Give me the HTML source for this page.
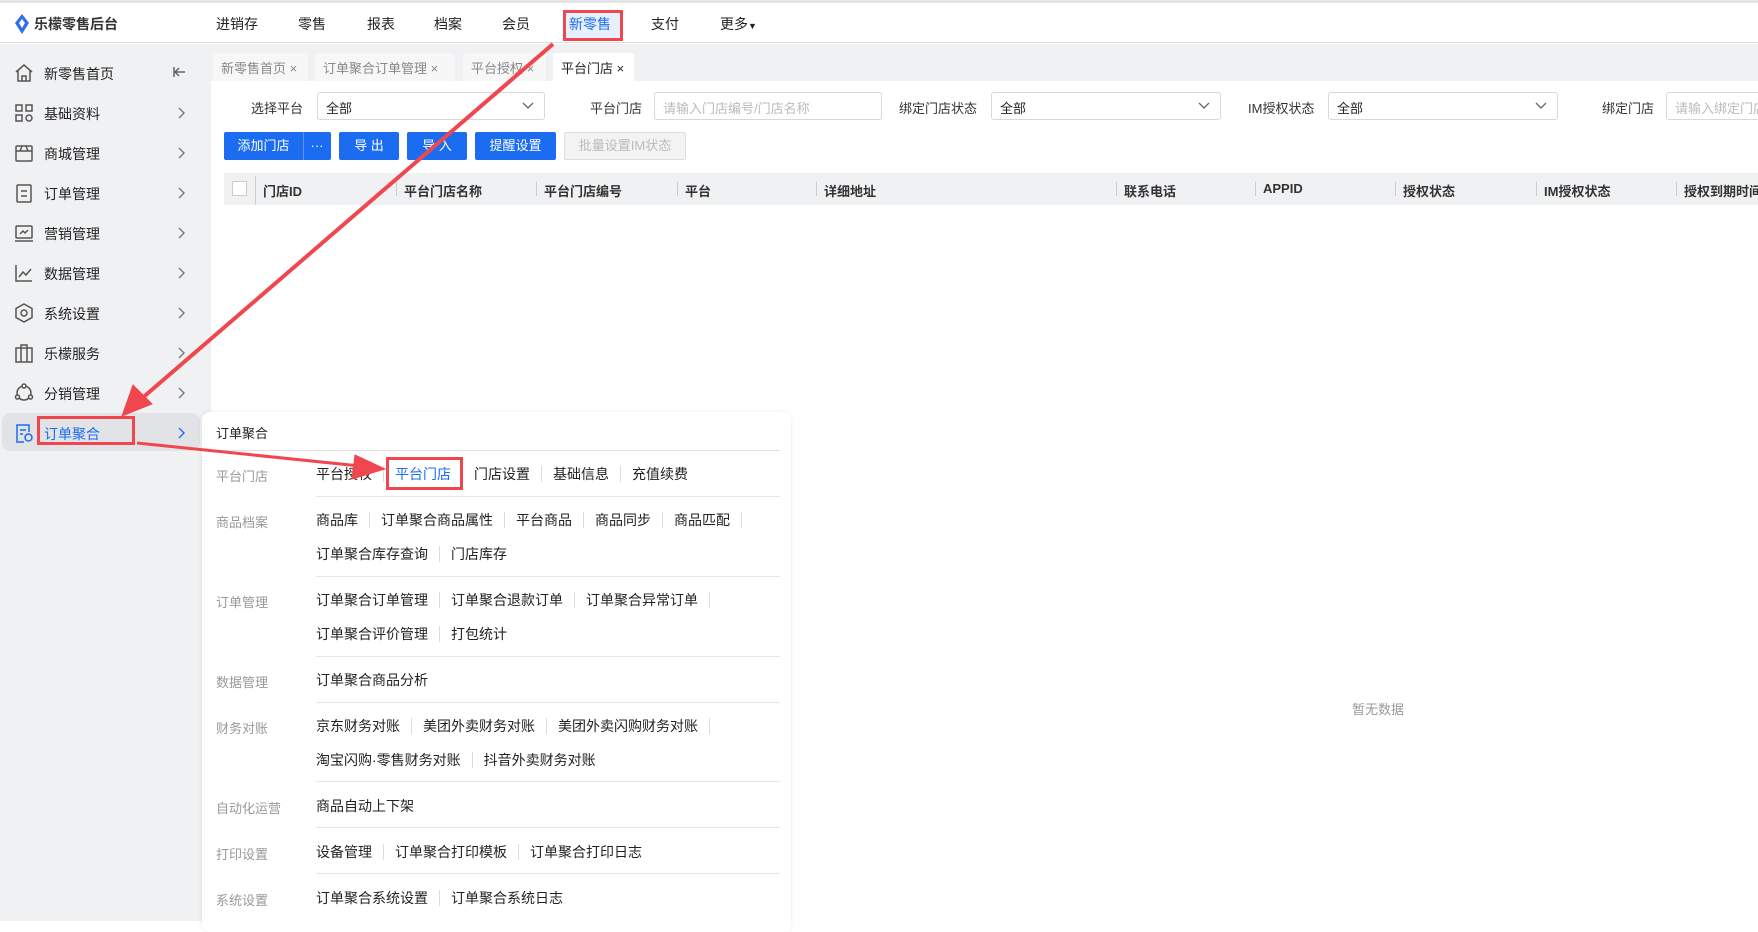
<!DOCTYPE html>
<html><head><meta charset="utf-8"><style>
*{box-sizing:border-box;margin:0;padding:0}
body{width:1758px;height:921px;overflow:hidden;background:#fff;font-family:"Liberation Sans","Noto Sans CJK SC",sans-serif;font-size:14px;color:#222;position:relative}
.a{position:absolute;white-space:nowrap}
.hdr{left:0;top:0;width:1758px;height:43px;border-top:3px solid #e4e5e7;border-bottom:1px solid #dcdde0;background:#fff}
.nav{top:14px;font-size:14px;color:#222}
.side{left:0;top:44px;width:211px;height:877px;background:#f0f1f3}
.si{left:44px;font-size:14px;color:#222}
.chev{left:176px}
.ico{left:14px}
.tabbar{left:211px;top:44px;width:1547px;height:37px;background:#f0f1f3}
.tab{top:53px;height:28px;background:#f7f7f8;color:#888;font-size:13px;padding:5px 8px;border-radius:3px 3px 0 0}
.lbl{font-size:13px;color:#333;top:98px}
.sel{top:92px;height:28px;border:1px solid #d8d8d8;border-radius:3px;font-size:13px;padding:5px 8px;color:#222}
.sel svg{position:absolute;right:10px;top:9px}
.ph{color:#bbb}
.btn{top:132px;height:28px;background:#1b6cf0;color:#fff;font-size:13px;border-radius:2px;text-align:center;line-height:28px}
.th{top:173px;left:224px;width:1534px;height:32px;background:#f0f1f3}
.tc{top:181px;font-size:13px;font-weight:bold;color:#333}
.tsep{top:182px;width:1px;height:14px;background:#ccc}
.pop{left:202px;top:412px;width:589px;height:520px;background:#fff;border-radius:8px;box-shadow:0 0 6px rgba(0,0,0,.08)}
.pl{left:216px;color:#999;font-size:13px}
.row{left:316px;font-size:14px;color:#222;display:flex}
.row span{padding-right:11px;margin-right:11px;border-right:1px solid #ddd;line-height:16px}
.hl{left:316px;width:464px;height:1px;background:#e6e6e6}
.red{border:3px solid #f0474f}
</style></head><body>
<div class="a hdr"></div>
<svg class="a" style="left:14px;top:14px" width="16" height="20" viewBox="0 0 16 20"><path d="M8 0 L15 9 L8 20 L1 9 Z" fill="#2f6fe8"/><path d="M8 5 L11 9 L8 14 L5 9Z" fill="#fff"/></svg>
<div class="a" style="left:34px;top:14px;font-size:14px;font-weight:bold;color:#333">乐檬零售后台</div>
<div class="a nav" style="left:216px">进销存</div>
<div class="a nav" style="left:298px">零售</div>
<div class="a nav" style="left:367px">报表</div>
<div class="a nav" style="left:434px">档案</div>
<div class="a nav" style="left:502px">会员</div>
<div class="a" style="left:563px;top:10px;width:60px;height:31px;background:#e8effd;border:3px solid #f0474f"></div>
<div class="a nav" style="left:569px;color:#1b6cf0">新零售</div>
<div class="a nav" style="left:651px">支付</div>
<div class="a nav" style="left:720px">更多<span style="font-size:9px">▼</span></div>

<div class="a side"></div>
<div class="a" style="left:2px;top:413px;width:198px;height:38px;background:#e2e3e6;border-radius:8px"></div>
<svg class="a ico" style="top:63px" width="20" height="20" fill="none" stroke="#555" stroke-width="1.5"><path d="M2 9 L10 2 L18 9 M4 7 V18 H16 V7 M8 18 V13 H12 V18"/></svg>
<div class="a si" style="top:64px">新零售首页</div>
<svg class="a" style="left:172px;top:65px" width="14" height="14" fill="none" stroke="#666" stroke-width="1.5"><path d="M2 2 V12 M13 7 H3 M7 3 L3 7 L7 11"/></svg>
<svg class="a ico" style="top:103px" width="20" height="20" fill="none" stroke="#555" stroke-width="1.5"><rect x="2" y="2" width="6" height="6"/><rect x="12" y="2" width="6" height="6"/><rect x="2" y="12" width="6" height="6"/><circle cx="15" cy="15" r="3"/></svg>
<div class="a si" style="top:104px">基础资料</div>
<svg class="a ico" style="top:143px" width="20" height="20" fill="none" stroke="#555" stroke-width="1.5"><rect x="2" y="3" width="16" height="15" rx="1"/><path d="M2 8 H18 M6 8 L8 3 M14 8 L12 3"/></svg>
<div class="a si" style="top:144px">商城管理</div>
<svg class="a ico" style="top:183px" width="20" height="20" fill="none" stroke="#555" stroke-width="1.5"><rect x="3" y="2" width="14" height="17" rx="1"/><path d="M7 8 H13 M7 13 H13"/></svg>
<div class="a si" style="top:184px">订单管理</div>
<svg class="a ico" style="top:223px" width="20" height="20" fill="none" stroke="#555" stroke-width="1.5"><rect x="2" y="3" width="16" height="12" rx="1"/><path d="M1 18 H19 M6 11 L9 8 L11 10 L14 7"/></svg>
<div class="a si" style="top:224px">营销管理</div>
<svg class="a ico" style="top:263px" width="20" height="20" fill="none" stroke="#555" stroke-width="1.5"><path d="M2 2 V18 H18 M5 14 L9 9 L12 12 L17 6"/></svg>
<div class="a si" style="top:264px">数据管理</div>
<svg class="a ico" style="top:303px" width="20" height="20" fill="none" stroke="#555" stroke-width="1.5"><path d="M10 1 L18 5.5 V14.5 L10 19 L2 14.5 V5.5Z"/><circle cx="10" cy="10" r="3"/></svg>
<div class="a si" style="top:304px">系统设置</div>
<svg class="a ico" style="top:343px" width="20" height="20" fill="none" stroke="#555" stroke-width="1.5"><rect x="2" y="5" width="16" height="14"/><path d="M7 5 V2 H13 V5 M7 5 V19 M13 5 V19"/></svg>
<div class="a si" style="top:344px">乐檬服务</div>
<svg class="a ico" style="top:383px" width="20" height="20" fill="none" stroke="#555" stroke-width="1.5"><circle cx="10" cy="10" r="7"/><circle cx="10" cy="3" r="2" fill="#f0f1f3"/><circle cx="3.5" cy="14" r="2" fill="#f0f1f3"/><circle cx="16.5" cy="14" r="2" fill="#f0f1f3"/></svg>
<div class="a si" style="top:384px">分销管理</div>
<svg class="a ico" style="top:423px" width="20" height="20" fill="none" stroke="#1b6cf0" stroke-width="1.5"><path d="M15 9 V2 H3 V19 H10"/><path d="M6 7 H12 M6 11 H9"/><circle cx="14.5" cy="14.5" r="3.5"/></svg>
<div class="a red" style="left:37px;top:416px;width:98px;height:29px"></div>
<div class="a si" style="top:424px;color:#1b6cf0">订单聚合</div>
<svg class="a chev" style="top:106px" width="10" height="14" fill="none" stroke="#777" stroke-width="1.4"><path d="M3 2 L8 7 L3 12"/></svg>
<svg class="a chev" style="top:146px" width="10" height="14" fill="none" stroke="#777" stroke-width="1.4"><path d="M3 2 L8 7 L3 12"/></svg>
<svg class="a chev" style="top:186px" width="10" height="14" fill="none" stroke="#777" stroke-width="1.4"><path d="M3 2 L8 7 L3 12"/></svg>
<svg class="a chev" style="top:226px" width="10" height="14" fill="none" stroke="#777" stroke-width="1.4"><path d="M3 2 L8 7 L3 12"/></svg>
<svg class="a chev" style="top:266px" width="10" height="14" fill="none" stroke="#777" stroke-width="1.4"><path d="M3 2 L8 7 L3 12"/></svg>
<svg class="a chev" style="top:306px" width="10" height="14" fill="none" stroke="#777" stroke-width="1.4"><path d="M3 2 L8 7 L3 12"/></svg>
<svg class="a chev" style="top:346px" width="10" height="14" fill="none" stroke="#777" stroke-width="1.4"><path d="M3 2 L8 7 L3 12"/></svg>
<svg class="a chev" style="top:386px" width="10" height="14" fill="none" stroke="#777" stroke-width="1.4"><path d="M3 2 L8 7 L3 12"/></svg>
<svg class="a chev" style="top:426px" width="10" height="14" fill="none" stroke="#1b6cf0" stroke-width="1.4"><path d="M3 2 L8 7 L3 12"/></svg>

<div class="a tabbar"></div>
<div class="a tab" style="left:213px;width:95px">新零售首页 ×</div>
<div class="a tab" style="left:315px;width:140px">订单聚合订单管理 ×</div>
<div class="a tab" style="left:463px;width:83px">平台授权 ×</div>
<div class="a tab" style="left:553px;width:81px;background:#fff;color:#222">平台门店 ×</div>

<div class="a lbl" style="left:251px">选择平台</div>
<div class="a sel" style="left:317px;width:228px">全部<svg width="12" height="8" fill="none" stroke="#666" stroke-width="1.3"><path d="M1 1 L6 6 L11 1"/></svg></div>
<div class="a lbl" style="left:590px">平台门店</div>
<div class="a sel ph" style="left:654px;width:228px">请输入门店编号/门店名称</div>
<div class="a lbl" style="left:899px">绑定门店状态</div>
<div class="a sel" style="left:991px;width:230px">全部<svg width="12" height="8" fill="none" stroke="#666" stroke-width="1.3"><path d="M1 1 L6 6 L11 1"/></svg></div>
<div class="a lbl" style="left:1248px">IM授权状态</div>
<div class="a sel" style="left:1328px;width:230px">全部<svg width="12" height="8" fill="none" stroke="#666" stroke-width="1.3"><path d="M1 1 L6 6 L11 1"/></svg></div>
<div class="a lbl" style="left:1602px">绑定门店</div>
<div class="a sel ph" style="left:1666px;width:100px">请输入绑定门店</div>

<div class="a btn" style="left:224px;width:107px"><span style="display:inline-block;width:79px;border-right:1px solid #5b93f3">添加门店</span><span style="display:inline-block;width:27px">···</span></div>
<div class="a btn" style="left:339px;width:60px">导 出</div>
<div class="a btn" style="left:407px;width:60px">导 入</div>
<div class="a btn" style="left:475px;width:81px">提醒设置</div>
<div class="a btn" style="left:564px;width:122px;background:#f3f3f4;color:#bbb;border:1px solid #ddd;line-height:26px">批量设置IM状态</div>

<div class="a th"></div>
<div class="a" style="left:232px;top:181px;width:15px;height:15px;border:1px solid #ccc;background:#fff"></div>
<div class="a tsep" style="left:255px;top:176px;height:29px"></div>
<div class="a tc" style="left:263px">门店ID</div>
<div class="a tsep" style="left:396px"></div><div class="a tc" style="left:404px">平台门店名称</div>
<div class="a tsep" style="left:536px"></div><div class="a tc" style="left:544px">平台门店编号</div>
<div class="a tsep" style="left:677px"></div><div class="a tc" style="left:685px">平台</div>
<div class="a tsep" style="left:816px"></div><div class="a tc" style="left:824px">详细地址</div>
<div class="a tsep" style="left:1116px"></div><div class="a tc" style="left:1124px">联系电话</div>
<div class="a tsep" style="left:1255px"></div><div class="a tc" style="left:1263px">APPID</div>
<div class="a tsep" style="left:1395px"></div><div class="a tc" style="left:1403px">授权状态</div>
<div class="a tsep" style="left:1536px"></div><div class="a tc" style="left:1544px">IM授权状态</div>
<div class="a tsep" style="left:1676px"></div><div class="a tc" style="left:1684px">授权到期时间</div>
<div class="a" style="left:1352px;top:699px;font-size:13px;color:#999">暂无数据</div>

<div class="a pop"></div>
<div class="a" style="left:216px;top:423px;font-size:13px">订单聚合</div>
<div class="a" style="left:216px;top:450px;width:564px;height:1px;background:#e0e0e0"></div>
<div class="a pl" style="top:466px">平台门店</div>
<div class="a row" style="top:466px"><span>平台授权</span><span style="color:#1b6cf0">平台门店</span><span>门店设置</span><span>基础信息</span><span style="border:none">充值续费</span></div>
<div class="a red" style="left:386px;top:457px;width:77px;height:33px"></div>
<div class="a hl" style="top:496px"></div>
<div class="a pl" style="top:512px">商品档案</div>
<div class="a row" style="top:512px"><span>商品库</span><span>订单聚合商品属性</span><span>平台商品</span><span>商品同步</span><span>商品匹配</span></div>
<div class="a row" style="top:546px"><span>订单聚合库存查询</span><span style="border:none">门店库存</span></div>
<div class="a hl" style="top:576px"></div>
<div class="a pl" style="top:592px">订单管理</div>
<div class="a row" style="top:592px"><span>订单聚合订单管理</span><span>订单聚合退款订单</span><span>订单聚合异常订单</span></div>
<div class="a row" style="top:626px"><span>订单聚合评价管理</span><span style="border:none">打包统计</span></div>
<div class="a hl" style="top:656px"></div>
<div class="a pl" style="top:672px">数据管理</div>
<div class="a row" style="top:672px"><span style="border:none">订单聚合商品分析</span></div>
<div class="a hl" style="top:702px"></div>
<div class="a pl" style="top:718px">财务对账</div>
<div class="a row" style="top:718px"><span>京东财务对账</span><span>美团外卖财务对账</span><span>美团外卖闪购财务对账</span></div>
<div class="a row" style="top:752px"><span>淘宝闪购·零售财务对账</span><span style="border:none">抖音外卖财务对账</span></div>
<div class="a hl" style="top:781px"></div>
<div class="a pl" style="top:798px">自动化运营</div>
<div class="a row" style="top:798px"><span style="border:none">商品自动上下架</span></div>
<div class="a hl" style="top:827px"></div>
<div class="a pl" style="top:844px">打印设置</div>
<div class="a row" style="top:844px"><span>设备管理</span><span>订单聚合打印模板</span><span style="border:none">订单聚合打印日志</span></div>
<div class="a hl" style="top:873px"></div>
<div class="a pl" style="top:890px">系统设置</div>
<div class="a row" style="top:890px"><span>订单聚合系统设置</span><span style="border:none">订单聚合系统日志</span></div>

<svg class="a" style="left:0;top:0" width="1758" height="921">
<g stroke="#f0474f" fill="#f0474f">
<line x1="553" y1="44" x2="140" y2="400" stroke-width="4"/>
<polygon points="122,416 133,385 152,404"/>
<line x1="137" y1="443" x2="360" y2="466" stroke-width="3"/>
<polygon points="385,469 355,455 352,479"/>
</g></svg>
</body></html>
